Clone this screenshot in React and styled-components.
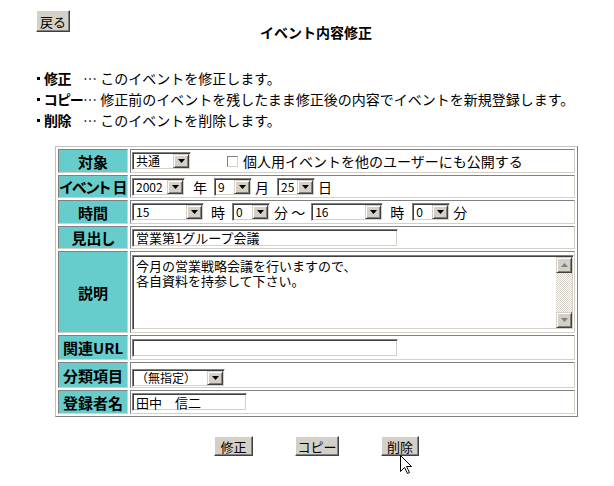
import React from 'react';
import styled, { createGlobalStyle } from 'styled-components';

const GlobalStyle = createGlobalStyle`
  body {
    margin: 0;
    background: #fff;
    color: #000;
    font-family: "Noto Sans CJK JP", "Liberation Sans", sans-serif;
  }
`;

const notes = [
  { term: '修正', text: 'このイベントを修正します。' },
  { term: 'コピー', text: '修正前のイベントを残したまま修正後の内容でイベントを新規登録します。' },
  { term: '削除', text: 'このイベントを削除します。' },
];

const Select = ({ width, value }) => (
  <SelectBox $w={width}>
    <SelectValue>{value}</SelectValue>
    <DropButton>
      <svg width='7' height='4' viewBox='0 0 7 4'>
        <path d='M0 0h7L3.5 4z' fill='#000' />
      </svg>
    </DropButton>
  </SelectBox>
);

const App = () => {
  return (
    <Page>
      <GlobalStyle />
      <Header>
        <ClassicButton $w={34} $h={22}>戻る</ClassicButton>
        <Title>イベント内容修正</Title>
      </Header>

      <NoteList>
        {notes.map((n) => (
          <NoteItem key={n.term}>
            <Term>
              <Dot />
              <span>{n.term}</span>
            </Term>
            <span>… {n.text}</span>
          </NoteItem>
        ))}
      </NoteList>

      <FormTable>
        <colgroup>
          <col style={{ width: 70 }} />
          <col />
        </colgroup>
        <tbody>
          <tr>
            <Label $h={24}>対象</Label>
            <Field>
              <FieldRow>
                <Select width={59} value='共通' />
                <CheckBox />
                <CheckLabel>個人用イベントを他のユーザーにも公開する</CheckLabel>
              </FieldRow>
            </Field>
          </tr>
          <tr>
            <Label $h={22} $tight>イベント 日</Label>
            <Field>
              <FieldRow>
                <Select width={53} value='2002' />
                <Unit $ml={8} $mr={7}>年</Unit>
                <Select width={38} value='9' />
                <Unit $ml={3} $mr={8}>月</Unit>
                <Select width={38} value='25' />
                <Unit $ml={3}>日</Unit>
              </FieldRow>
            </Field>
          </tr>
          <tr>
            <Label $h={24}>時間</Label>
            <Field>
              <FieldRow>
                <Select width={72} value='15' />
                <Unit $ml={7} $mr={7}>時</Unit>
                <Select width={38} value='0' />
                <Unit $ml={4} $mr={6}>分 ～</Unit>
                <Select width={72} value='16' />
                <Unit $ml={7} $mr={8}>時</Unit>
                <Select width={38} value='0' />
                <Unit $ml={3}>分</Unit>
              </FieldRow>
            </Field>
          </tr>
          <tr>
            <Label $h={23}>見出し</Label>
            <Field>
              <TextInput $w={266} readOnly value='営業第1グループ会議' />
            </Field>
          </tr>
          <tr>
            <Label $h={82}>説明</Label>
            <Field>
              <MemoBox>
                <MemoText>{'今月の営業戦略会議を行いますので、\n各自資料を持参して下さい。'}</MemoText>
                <ScrollBar>
                  <ScrollButton>
                    <svg width='7' height='4' viewBox='0 0 7 4'>
                      <path d='M0 4h7L3.5 0z' fill='#808080' />
                    </svg>
                  </ScrollButton>
                  <ScrollButton>
                    <svg width='7' height='4' viewBox='0 0 7 4'>
                      <path d='M0 0h7L3.5 4z' fill='#808080' />
                    </svg>
                  </ScrollButton>
                </ScrollBar>
              </MemoBox>
            </Field>
          </tr>
          <tr>
            <Label $h={25}>関連URL</Label>
            <Field>
              <TextInput $w={266} readOnly value='' />
            </Field>
          </tr>
          <tr>
            <Label $h={23}>分類項目</Label>
            <Field>
              <Select width={93} value='（無指定）' />
            </Field>
          </tr>
          <tr>
            <Label $h={24}>登録者名</Label>
            <Field>
              <TextInput $w={115} readOnly value='田中　信二' />
            </Field>
          </tr>
        </tbody>
      </FormTable>

      <ButtonRow>
        <ClassicButton $w={39} $h={20}>修正</ClassicButton>
        <ClassicButton $w={44} $h={20}>コピー</ClassicButton>
        <ClassicButton $w={38} $h={20}>削除</ClassicButton>
      </ButtonRow>

      <Pointer width='13' height='20' viewBox='0 0 13 20'>
        <path
          d='M0.5 0.5 L0.5 16.5 L4.5 12.5 L7.5 18.5 L9.5 17.5 L6.5 11.5 L11.5 11.5 Z'
          fill='#fff'
          stroke='#000'
          strokeWidth='1'
        />
      </Pointer>
    </Page>
  );
};

export default App;

const Page = styled.div`
  position: relative;
  width: 614px;
  height: 486px;
  padding-top: 10px;
  box-sizing: border-box;
  overflow: hidden;
`;

const Header = styled.div`
  display: flex;
  align-items: flex-start;
  width: 562px;
  padding-left: 36px;
  box-sizing: border-box;
`;

const ClassicButton = styled.button`
  width: ${({ $w }) => $w}px;
  height: ${({ $h }) => $h}px;
  padding: 0;
  box-sizing: border-box;
  background: #d4d0c8;
  border: 1px solid;
  border-color: #ffffff #404040 #404040 #ffffff;
  box-shadow: inset -1px -1px #808080;
  font-family: "Noto Sans CJK JP", sans-serif;
  font-size: 13px;
  line-height: 1;
  color: #000;
  cursor: default;
`;

const Title = styled.h1`
  flex: 1;
  margin: 0;
  padding-top: 14px;
  text-align: center;
  font-size: 14px;
  font-weight: bold;
  line-height: 16px;
`;

const NoteList = styled.ul`
  list-style: none;
  margin: 27px 0 0 36px;
  padding: 0;
`;

const NoteItem = styled.li`
  display: flex;
  align-items: center;
  height: 21px;
  font-size: 14px;
  white-space: nowrap;
`;

const Term = styled.span`
  display: flex;
  align-items: center;
  flex-shrink: 0;
  width: 47px;
  height: 21px;
  font-weight: bold;
  font-size: 14px;
  letter-spacing: -0.5px;
  font-feature-settings: "palt";
`;

const Dot = styled.span`
  flex-shrink: 0;
  width: 3px;
  height: 3px;
  margin: 1px 4px 0 1px;
  background: #000;
`;

const FormTable = styled.table`
  margin: 16px 0 0 55px;
  width: 523px;
  table-layout: fixed;
  border-collapse: separate;
  border-spacing: 2px;
  border: 1px solid;
  border-color: #c0c0c0 #808080 #808080 #c0c0c0;
`;

const Label = styled.th`
  height: ${({ $h }) => $h}px;
  box-sizing: border-box;
  padding: 0;
  background: #66cccc;
  border: 1px solid;
  border-color: #808080 #d4d0c8 #d4d0c8 #808080;
  font-size: 15px;
  font-weight: bold;
  letter-spacing: ${({ $tight }) => ($tight ? '-1px' : '0')};
  text-align: center;
  white-space: nowrap;
  font-feature-settings: "palt";
`;

const Field = styled.td`
  padding: 0 1px;
  box-sizing: border-box;
  border: 1px solid;
  border-color: #808080 #d4d0c8 #d4d0c8 #808080;
  vertical-align: middle;
`;

const FieldRow = styled.div`
  display: flex;
  align-items: center;
  font-size: 14px;
  white-space: nowrap;
`;

const SelectBox = styled.div`
  display: inline-flex;
  align-items: center;
  width: ${({ $w }) => $w}px;
  height: 18px;
  padding: 1px;
  box-sizing: border-box;
  background: #fff;
  border: 1px solid;
  border-color: #808080 #ffffff #ffffff #808080;
  box-shadow: inset 1px 1px #404040, inset -1px -1px #d4d0c8;
  font-size: 12px;
  vertical-align: middle;
`;

const SelectValue = styled.span`
  flex: 1;
  padding-left: 2px;
  line-height: 14px;
  white-space: nowrap;
`;

const DropButton = styled.span`
  display: flex;
  align-items: center;
  justify-content: center;
  flex-shrink: 0;
  width: 16px;
  height: 14px;
  box-sizing: border-box;
  background: #d4d0c8;
  border: 1px solid;
  border-color: #d4d0c8 #404040 #404040 #d4d0c8;
  box-shadow: inset 1px 1px #fff, inset -1px -1px #808080;
`;

const CheckBox = styled.span`
  width: 11px;
  height: 11px;
  margin-left: 36px;
  box-sizing: border-box;
  background: #fff;
  border: 1px solid;
  border-color: #808080 #d4d0c8 #d4d0c8 #808080;
`;

const CheckLabel = styled.span`
  margin-left: 5px;
`;

const Unit = styled.span`
  margin-left: ${({ $ml }) => $ml || 0}px;
  margin-right: ${({ $mr }) => $mr || 0}px;
`;

const TextInput = styled.input`
  display: block;
  width: ${({ $w }) => $w}px;
  height: 18px;
  padding: 0 3px;
  margin: 0;
  box-sizing: border-box;
  background: #fff;
  border: 1px solid;
  border-color: #808080 #ffffff #ffffff #808080;
  box-shadow: inset 1px 1px #404040, inset -1px -1px #d4d0c8;
  font-family: "Noto Sans CJK JP", sans-serif;
  font-size: 13px;
  color: #000;
  outline: none;
`;

const MemoBox = styled.div`
  display: flex;
  width: 442px;
  height: 75px;
  padding: 1px;
  box-sizing: border-box;
  background: #fff;
  border: 1px solid;
  border-color: #808080 #ffffff #ffffff #808080;
  box-shadow: inset 1px 1px #404040, inset -1px -1px #d4d0c8;
`;

const MemoText = styled.div`
  flex: 1;
  padding: 1px 2px;
  font-size: 13px;
  line-height: 15px;
  white-space: pre;
`;

const ScrollBar = styled.div`
  display: flex;
  flex-direction: column;
  justify-content: space-between;
  width: 16px;
  background: repeating-conic-gradient(#d4d0c8 0 25%, #ffffff 0 50%) 0 0 / 2px 2px;
`;

const ScrollButton = styled.span`
  display: flex;
  align-items: center;
  justify-content: center;
  height: 16px;
  box-sizing: border-box;
  background: #d4d0c8;
  border: 1px solid;
  border-color: #d4d0c8 #404040 #404040 #d4d0c8;
  box-shadow: inset 1px 1px #fff, inset -1px -1px #808080;
`;

const ButtonRow = styled.div`
  display: flex;
  justify-content: center;
  gap: 42px;
  width: 523px;
  margin: 19px 0 0 55px;
`;

const Pointer = styled.svg`
  position: absolute;
  left: 400px;
  top: 455px;
`;
